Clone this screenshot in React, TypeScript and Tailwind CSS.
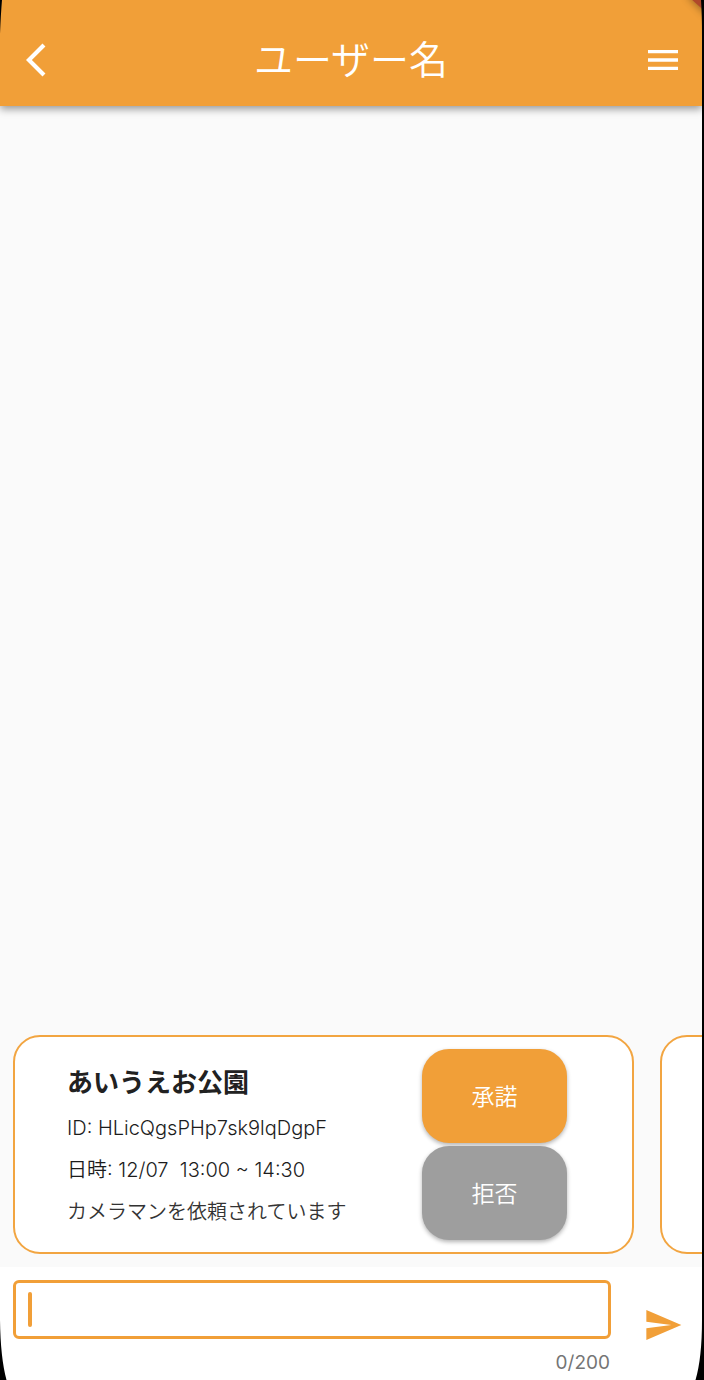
import { useState } from "react";
import { MdArrowBackIos, MdMenu, MdSend } from "react-icons/md";

type Offer = { place: string; id: string; date: string; note: string };

const offers: Offer[] = [
  {
    place: "あいうえお公園",
    id: "ID: HLicQgsPHp7sk9lqDgpF",
    date: "日時: 12/07  13:00 ~ 14:30",
    note: "カメラマンを依頼されています",
  },
];

const cardClass =
  "min-w-0 shrink-0 basis-[calc(90%+1px)] rounded-[27px] border-2 border-[#f2a541] bg-white";

const actionClass =
  "h-[94px] rounded-[27px] pt-0.5 text-[23px] font-[350] text-white shadow-[0_2px_4px_rgba(0,0,0,0.3)]";

function OfferCard({ offer }: { offer: Offer }) {
  return (
    <article className={`${cardClass} flex items-center justify-between py-3 pr-[65px] pl-[52px]`}>
      <div className="flex flex-col gap-3 pt-[3px] text-[20px] leading-[30px] font-[350] whitespace-pre text-[#1c1c1c]">
        <h2 className="text-[26px] leading-9 font-bold text-[#212121]">{offer.place}</h2>
        <p>{offer.id}</p>
        <p>{offer.date}</p>
        <p className="text-[#333333]">{offer.note}</p>
      </div>
      <div className="flex w-[145px] flex-col gap-[3px]">
        <button type="button" className={`${actionClass} bg-[#f19f38]`}>
          承諾
        </button>
        <button type="button" className={`${actionClass} bg-[#9e9e9e]`}>
          拒否
        </button>
      </div>
    </article>
  );
}

export default function App() {
  const [message, setMessage] = useState("");

  return (
    <div className="min-h-screen bg-black pr-0.5 font-['Inter','Noto_Sans_CJK_JP',sans-serif]">
      <div className="relative flex min-h-screen flex-col overflow-hidden bg-[#fafafa]">
        <header className="z-10 grid grid-cols-[1fr_auto_1fr] items-center bg-[#f19f38] px-[19px] pt-10 pb-[26px] text-white shadow-[0_3px_8px_rgba(0,0,0,0.4)]">
          <button type="button" aria-label="戻る" className="justify-self-start pl-[7px]">
            <MdArrowBackIos className="size-10" />
          </button>
          <h1 className="text-[39px] leading-10 font-[350]">ユーザー名</h1>
          <button type="button" aria-label="メニュー" className="justify-self-end">
            <MdMenu className="size-10" />
          </button>
        </header>

        <main className="flex flex-1 flex-col justify-end">
          <section aria-label="依頼" className="flex gap-[26px] overflow-hidden py-[13px] pl-[13px]">
            {offers.map((offer) => (
              <OfferCard key={offer.id} offer={offer} />
            ))}
            <article className={cardClass} />
          </section>
        </main>

        <form
          className="flex items-start gap-8 bg-white pt-[13px] pr-[19px] pb-[5px] pl-[13px]"
          onSubmit={(e) => e.preventDefault()}
        >
          <div className="flex flex-1 flex-col gap-3">
            <div className="relative">
              <input
                type="text"
                aria-label="メッセージ"
                maxLength={200}
                value={message}
                onChange={(e) => setMessage(e.target.value)}
                className="peer block h-[59px] w-full rounded-md border-3 border-[#f19f38] bg-white px-3 text-[22px] text-[#212121] caret-[#f19f38] outline-none"
              />
              {message === "" && (
                <span className="pointer-events-none absolute top-3 left-[15px] h-[35px] w-1 rounded-sm bg-[#f19f38] peer-focus:hidden" />
              )}
            </div>
            <p className="pr-px text-right text-[19px] leading-6 text-[#757575]">{message.length}/200</p>
          </div>
          <button type="submit" aria-label="送信" className="pt-[25px] text-[#f19f38]">
            <MdSend className="size-10" />
          </button>
        </form>

        <div className="pointer-events-none absolute top-0 right-0 z-20 size-10 overflow-hidden">
          <svg viewBox="0 0 40 40" className="size-10" aria-hidden="true">
            <defs>
              <filter id="soft" x="-100%" y="-100%" width="300%" height="300%">
                <feGaussianBlur stdDeviation="4" />
              </filter>
            </defs>
            <path d="M24-6H46V16Z" fill="#000" opacity="0.4" filter="url(#soft)" />
            <path d="M28-2H42V10.500Z" fill="#b0482a" />
            <path d="M39 0H40V36Q40 14 39 0Z" fill="#000" />
          </svg>
        </div>
        <svg viewBox="0 0 4 40" className="pointer-events-none absolute top-0 left-0 z-20 h-10 w-1" aria-hidden="true">
          <path d="M0 0H2Q.8 14 0 34Z" fill="#000" />
        </svg>
        <svg viewBox="0 0 8 64" className="pointer-events-none absolute bottom-0 left-0 z-20 h-16 w-2" aria-hidden="true">
          <path d="M0 4Q.5 42 6.500 64H0Z" fill="#000" />
        </svg>
        <svg viewBox="0 0 8 64" className="pointer-events-none absolute right-0 bottom-0 z-20 h-16 w-2" aria-hidden="true">
          <path d="M8 4Q8 42 1.500 64H8Z" fill="#000" />
        </svg>
      </div>
    </div>
  );
}
